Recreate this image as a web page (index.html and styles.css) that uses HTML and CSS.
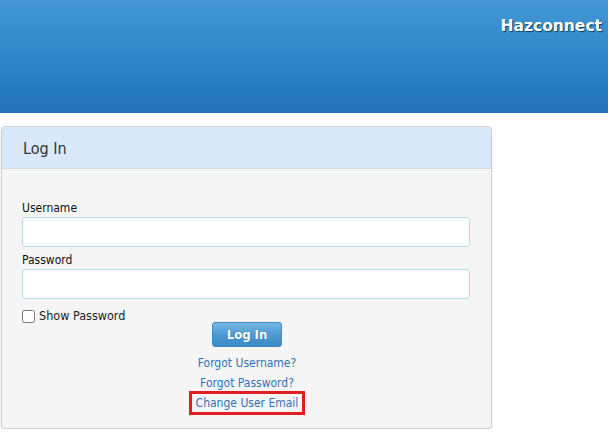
FILE: index.html
```html
<!DOCTYPE html>
<html>
<head>
<meta charset="utf-8">
<link rel="stylesheet" href="styles.css">
</head>
<body>
<header class="topbar">
  <div class="brand">Hazconnect</div>
</header>
<main class="content">
  <section class="panel">
    <div class="panel-heading">Log In</div>
    <form class="panel-body">
      <label class="field-label" for="u">Username</label>
      <input class="field" id="u" type="text">
      <label class="field-label" for="p">Password</label>
      <input class="field" id="p" type="password">
      <label class="check-row"><input type="checkbox" class="check"> <span>Show Password</span></label>
      <div class="actions">
        <button type="button" class="btn">Log In</button>
        <a href="#" class="link">Forgot Username?</a>
        <a href="#" class="link">Forgot Password?</a>
        <a href="#" class="link highlight">Change User Email</a>
      </div>
    </form>
  </section>
</main>
</body>
</html>
```
FILE: styles.css
```css
* { box-sizing: border-box; }
html, body { margin: 0; padding: 0; background: #fff; }
body {
  font-family: "DejaVu Sans Condensed", "DejaVu Sans", sans-serif;
  font-stretch: condensed;
  font-size: 12px;
  color: #222;
}
.topbar {
  height: 113px;
  background: linear-gradient(to bottom, #4497d4 0%, #3286c7 50%, #2072b4 100%);
  display: flex;
  justify-content: flex-end;
  padding: 16px 6px 0 0;
}
.brand {
  color: #fff;
  font-family: "DejaVu Sans", sans-serif;
  font-stretch: normal;
  font-weight: bold;
  font-size: 15.5px;
  line-height: 20px;
  height: 20px;
  text-shadow: 1px 1px 1px #0b3d66;
}
.content { padding: 13px 0 0 1px; }
.panel {
  width: 491px;
  border: 1px solid #cfcfcf;
  border-radius: 4px;
  background: #f5f5f5;
  box-shadow: 0 1px 2px rgba(0,0,0,0.12);
  overflow: hidden;
}
.panel-heading {
  background: #d9e8fb;
  border-bottom: 1px solid #d4dbe3;
  height: 42px;
  padding: 0 0 0 21px;
  font-size: 16px;
  line-height: 43px;
  color: #333;
}
.panel-body {
  display: flex;
  flex-direction: column;
  padding: 30px 21px 13px 20px;
}
.field-label {
  line-height: 18px;
  color: #111;
}
.field {
  height: 30px;
  width: 448px;
  border: 1px solid #b3dbe8;
  border-radius: 3px;
  background: #fff;
  margin: 0 0 4px 0;
}
.check-row {
  display: flex;
  align-items: center;
  gap: 4px;
  margin-top: 5px;
  line-height: 16px;
  font-size: 12.5px;
}
.check {
  width: 13px;
  height: 13px;
  margin: 0;
}
.actions {
  display: flex;
  flex-direction: column;
  align-items: center;
  margin-top: -2px;
  padding-left: 2px;
}
.btn {
  width: 70px;
  height: 25px;
  border: 1px solid #3f8ac3;
  border-radius: 3px;
  background: linear-gradient(to bottom, #74b6e4 0%, #4e9bd4 50%, #3a88c6 100%);
  color: #fff;
  font-family: inherit;
  font-stretch: condensed;
  font-weight: bold;
  font-size: 13px;
  text-shadow: 0 0 1px #1d5f93;
  margin-bottom: 6px;
}
.link {
  color: #2f73b9;
  text-decoration: none;
  line-height: 20px;
  font-size: 12px;
}
.highlight {
  border: 3px solid #e01e22;
  padding: 0 4px;
  line-height: 18px;
  margin-top: -2px;
}
```
